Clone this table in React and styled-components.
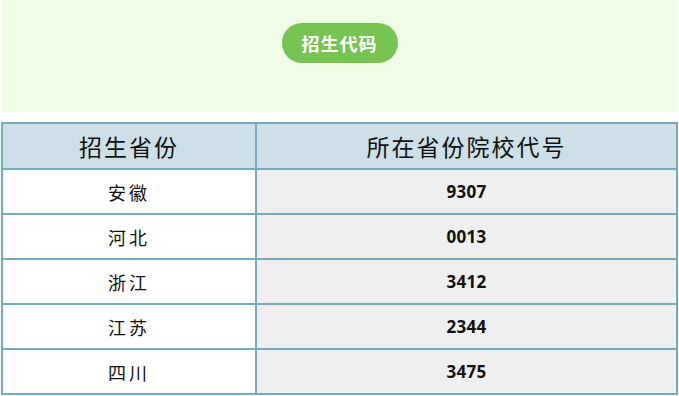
import React from 'react'
import styled, { createGlobalStyle } from 'styled-components'

const GlobalStyle = createGlobalStyle`
  body {
    margin: 0;
    background: #ffffff;
    font-family: "Noto Sans CJK SC", "Noto Sans", sans-serif;
  }
`

const Page = styled.div`
  width: 679px;
  padding: 0 1px;
  box-sizing: border-box;
`

const Banner = styled.div`
  height: 112px;
  background: #f0fee8;
  display: flex;
  justify-content: center;
  align-items: flex-start;
  padding-top: 23px;
  box-sizing: border-box;
  width: 676px;
`

const Pill = styled.div`
  width: 116px;
  height: 40px;
  margin-left: 1px;
  border-radius: 20px;
  background: #78c452;
  color: #ffffff;
  font-weight: 700;
  font-size: 18px;
  display: flex;
  align-items: center;
  justify-content: center;
  letter-spacing: 1px;
`

const Table = styled.table`
  margin-top: 10px;
  width: 677px;
  border-collapse: collapse;
  border: 2px solid #77a9bf;
`

const HeadCell = styled.th`
  height: 44px;
  padding: 0;
  background: #cde0e8;
  border: 2px solid #77a9bf;
  font-weight: 400;
  font-size: 23px;
  letter-spacing: 2px;
  color: #111;
  width: ${p => p.$w || 'auto'};
`

const Cell = styled.td`
  height: 43px;
  padding: 0;
  border: 2px solid #77a9bf;
  text-align: center;
  background: ${p => (p.$code ? '#efefef' : '#ffffff')};
  color: #111;
  font-family: ${p => (p.$code ? '"Open Sans", "Liberation Sans", sans-serif' : '"Noto Sans CJK SC", sans-serif')};
  font-weight: ${p => (p.$code ? 700 : 400)};
  font-size: ${p => (p.$code ? '17px' : '18px')};
  letter-spacing: ${p => (p.$code ? '0.3px' : '3px')};
`

const rows = [
  ['安徽', '9307'],
  ['河北', '0013'],
  ['浙江', '3412'],
  ['江苏', '2344'],
  ['四川', '3475'],
]

export default function App() {
  return (
    <>
      <GlobalStyle />
      <Page>
        <Banner>
          <Pill>招生代码</Pill>
        </Banner>
        <Table>
          <thead>
            <tr>
              <HeadCell $w="252px">招生省份</HeadCell>
              <HeadCell>所在省份院校代号</HeadCell>
            </tr>
          </thead>
          <tbody>
            {rows.map(([prov, code]) => (
              <tr key={prov}>
                <Cell>{prov}</Cell>
                <Cell $code>{code}</Cell>
              </tr>
            ))}
          </tbody>
        </Table>
      </Page>
    </>
  )
}
